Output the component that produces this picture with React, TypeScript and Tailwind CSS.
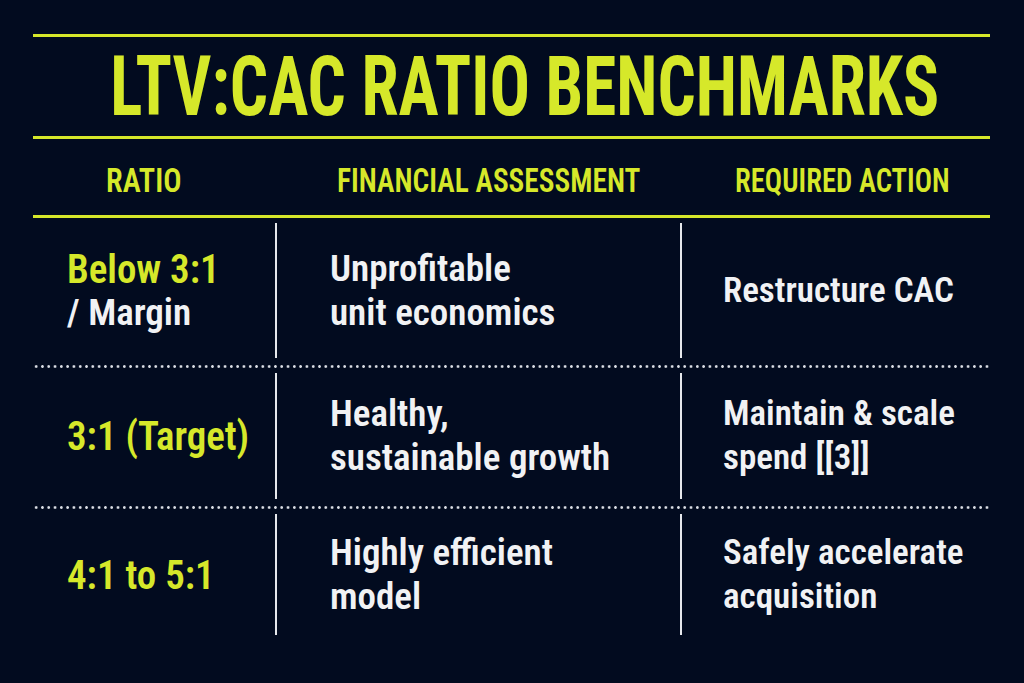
import type { ReactNode } from "react"

const rows = [
  {
    ratio: "Below 3:1",
    ratioSub: "/ Margin",
    assessment: ["Unprofitable", "unit economics"],
    action: ["Restructure CAC"],
    h: "h-[135px]",
  },
  {
    ratio: "3:1 (Target)",
    assessment: ["Healthy,", "sustainable growth"],
    action: ["Maintain & scale", "spend [[3]]"],
    h: "h-[126px]",
  },
  {
    ratio: "4:1 to 5:1",
    assessment: ["Highly efficient", "model"],
    action: ["Safely accelerate", "acquisition"],
    h: "h-[121px]",
  },
]

function Dotted() {
  return (
    <div className="h-[3px] w-full bg-[radial-gradient(circle,#d9dce3_1.1px,transparent_1.6px)] bg-[length:6.3px_3px]" />
  )
}

function Cell({ children, className }: { children: ReactNode; className?: string }) {
  return <div className={`flex h-full flex-col justify-center ${className ?? ""}`}>{children}</div>
}

function Line({ children, size = "text-[37px]" }: { children: ReactNode; size?: string }) {
  return <div className={`${size} leading-[44px] font-semibold whitespace-nowrap text-[#f1f2f4]`}>{children}</div>
}

export default function App() {
  return (
    <div
      className="h-[683px] w-full overflow-hidden bg-[#020b1f]"
      style={{ fontFamily: "'Roboto Condensed', 'Roboto', 'Liberation Sans', sans-serif" }}
    >
      <div className="ml-[33px] w-[957px] pt-[34px]">
        <div className="h-[3px] bg-[#d6e82a]" />
        <div className="flex h-[99px] items-center justify-center pl-[26px]">
          <h1 className="inline-block scale-x-[0.81] text-[83px] leading-none font-bold whitespace-nowrap text-[#d6e82a]">
            LTV:CAC RATIO BENCHMARKS
          </h1>
        </div>
        <div className="h-[3px] bg-[#d6e82a]" />

        <div className="grid h-[76px] grid-cols-[242px_405px_310px] items-center pt-[8px] text-[33px] font-semibold whitespace-nowrap text-[#d6e82a]">
          <div className="pl-[73px]">
            <span className="inline-block origin-left scale-x-[0.92]">RATIO</span>
          </div>
          <div className="pl-[62px]">
            <span className="inline-block origin-left scale-x-[0.89]">FINANCIAL ASSESSMENT</span>
          </div>
          <div className="pl-[55px]">
            <span className="inline-block origin-left scale-x-[0.87]">REQUIRED ACTION</span>
          </div>
        </div>
        <div className="h-[3px] bg-[#d6e82a]" />

        {rows.map((r, i) => (
          <div key={r.ratio}>
            {i > 0 && <Dotted />}
            <div className="pt-[5px] pb-[7px]">
              <div className={`grid grid-cols-[242px_405px_310px] ${r.h}`}>
                <Cell className="pl-[34px]">
                  <div className="text-[41px] leading-[44px] font-semibold whitespace-nowrap text-[#d6e82a]">
                    <span className="inline-block origin-left scale-x-[0.95]">{r.ratio}</span>
                  </div>
                  {r.ratioSub && <Line>{r.ratioSub}</Line>}
                </Cell>
                <Cell className="border-l-2 border-[#e6e8ec] pl-[53px]">
                  {r.assessment.map((t) => (
                    <Line key={t}>{t}</Line>
                  ))}
                </Cell>
                <Cell className="border-l-2 border-[#e6e8ec] pl-[41px]">
                  {r.action.map((t) => (
                    <Line key={t} size="text-[35px]">
                      {t}
                    </Line>
                  ))}
                </Cell>
              </div>
            </div>
          </div>
        ))}
      </div>
    </div>
  )
}
